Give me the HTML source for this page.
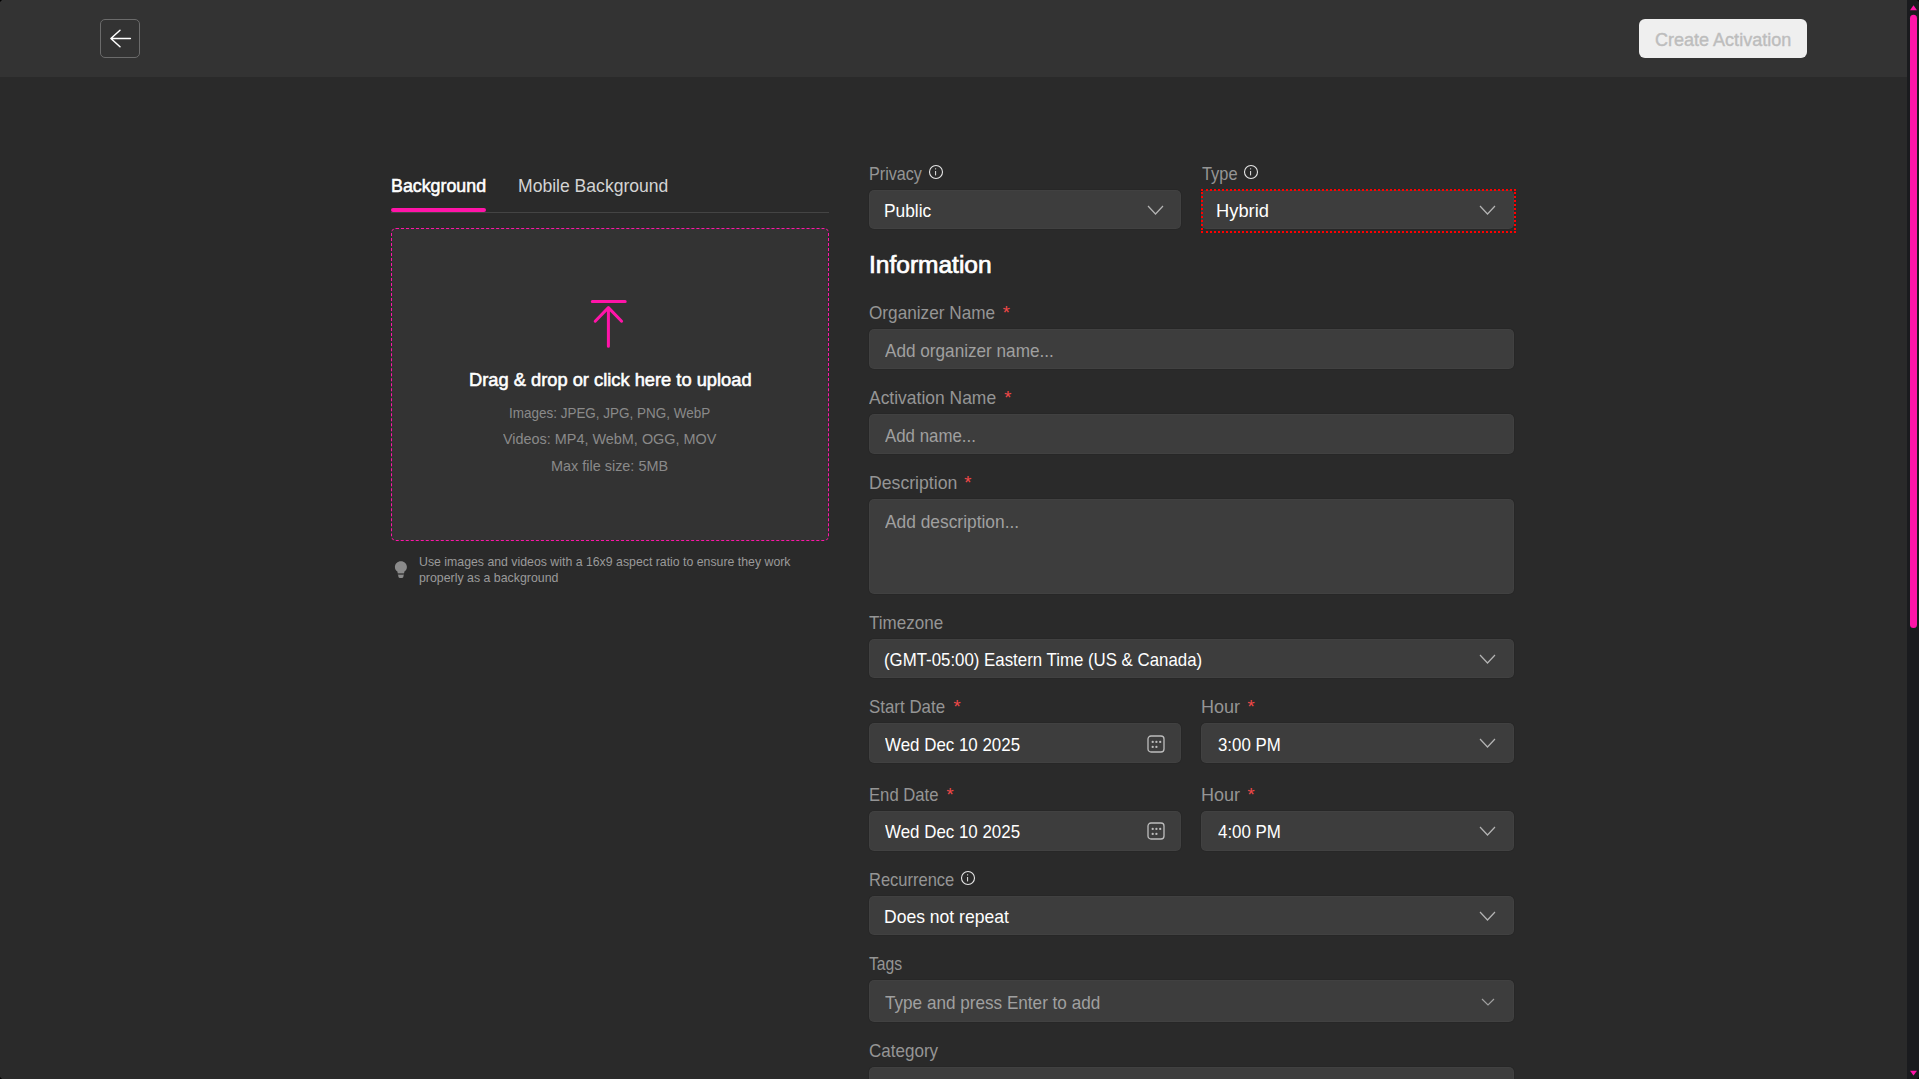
<!DOCTYPE html><html><head><meta charset="utf-8"><style>
html,body{margin:0;padding:0;width:1919px;height:1079px;overflow:hidden;background:#2a2a2a;font-family:"Liberation Sans",sans-serif}
.a{position:absolute}
.t{position:absolute;white-space:pre;transform-origin:0 0;line-height:20px;font-family:"Liberation Sans",sans-serif}
.box{position:absolute;background:#3d3d3d;border-radius:5px;box-shadow:0 0 0 1px rgba(0,0,0,0.07),inset 0 0 0 1px rgba(255,255,255,0.025)}
.chev{position:absolute}
</style></head><body>

<div class="a" style="left:0;top:0;width:1907px;height:77px;background:#333333"></div>
<div class="a" style="left:100px;top:19px;width:40px;height:39px;box-sizing:border-box;border:1px solid #6b6b6b;border-radius:5px"></div>
<svg class="a" style="left:100px;top:19px" width="40" height="39" viewBox="0 0 40 39"><path d="M30.4 19.5H10.9M20 11.2L10.9 19.5L20 27.7" fill="none" stroke="#ffffff" stroke-width="1.5" stroke-linecap="round" stroke-linejoin="round"/></svg>
<div class="a" style="left:1639px;top:19px;width:168px;height:39px;background:#efefef;border-radius:6px"></div>
<div class="a" style="left:1907px;top:0;width:12px;height:1079px;background:#1a1b1e"></div>
<svg class="a" style="left:1907px;top:0" width="12" height="1079" viewBox="0 0 12 1079"><path d="M3 10.2L10 10.2L6.5 5.2Z" fill="#ff14a8"/><rect x="3" y="14.8" width="7" height="613.2" rx="3.5" fill="#ff14a8"/><path d="M3 1070.8L10 1070.8L6.5 1075.6Z" fill="#ff14a8"/></svg>
<div class="a" style="left:391px;top:212px;width:438px;height:1px;background:#444444"></div>
<div class="a" style="left:391px;top:208px;width:95px;height:4px;background:#ff14a8;border-radius:2px"></div>
<div class="a" style="left:391px;top:228px;width:438px;height:313px;box-sizing:border-box;border:1px dashed #ff14a8;border-radius:5px;background:#333333"></div>
<svg class="a" style="left:585px;top:290px" width="50" height="65" viewBox="585 290 50 65"><path d="M592.3 301.5H625.2M608.4 307.8V346.3M595.2 321.2L608.4 307.6L621.6 321.2" fill="none" stroke="#ff14a8" stroke-width="3" stroke-linecap="round" stroke-linejoin="round"/></svg>
<svg class="a" style="left:390px;top:556px" width="22" height="26" viewBox="390 556 22 26"><path d="M400.9 561.2C397.5 561.2 394.9 563.8 394.9 567C394.9 569 395.9 570.5 397.4 571.6L397.7 573.2H404.1L404.4 571.6C405.9 570.5 406.9 569 406.9 567C406.9 563.8 404.3 561.2 400.9 561.2Z" fill="#8a8a8a"/><rect x="397.8" y="573.3" width="6.2" height="1.5" fill="#555"/><path d="M398.1 575.1H403.7L403.3 576.9C403 577.6 402.3 577.9 401.6 577.9H400.2C399.5 577.9 398.8 577.6 398.5 576.9Z" fill="#8a8a8a"/></svg>
<div class="box" style="left:869px;top:190px;width:312px;height:39px"></div>
<div class="box" style="left:1201px;top:190px;width:313px;height:39px"></div>
<div class="box" style="left:869px;top:329.3px;width:645px;height:39.7px"></div>
<div class="box" style="left:869px;top:414.2px;width:645px;height:39.6px"></div>
<div class="box" style="left:869px;top:499.2px;width:645px;height:95px"></div>
<div class="box" style="left:869px;top:639.2px;width:645px;height:38.7px"></div>
<div class="box" style="left:869px;top:723.3px;width:312px;height:39.6px"></div>
<div class="box" style="left:1201px;top:723.3px;width:313px;height:39.6px"></div>
<div class="box" style="left:869px;top:811.2px;width:312px;height:39.6px"></div>
<div class="box" style="left:1201px;top:811.2px;width:313px;height:39.6px"></div>
<div class="box" style="left:869px;top:896.2px;width:645px;height:38.4px"></div>
<div class="box" style="left:869px;top:980.4px;width:645px;height:41.3px"></div>
<div class="box" style="left:869px;top:1067.1px;width:645px;height:40px"></div>
<div class="a" style="left:1201px;top:189px;width:315px;height:44px;box-sizing:border-box;border:2px dotted #ff0000"></div>
<svg class="a" style="left:1146.0px;top:204.3px" width="19" height="12" viewBox="0 0 19 12"><path d="M2 2L9.5 10L17 2" fill="none" stroke="#b4b4b4" stroke-width="1.2"/></svg>
<svg class="a" style="left:1477.9px;top:204.3px" width="19" height="12" viewBox="0 0 19 12"><path d="M2 2L9.5 10L17 2" fill="none" stroke="#b4b4b4" stroke-width="1.2"/></svg>
<svg class="a" style="left:1477.9px;top:653.3px" width="19" height="12" viewBox="0 0 19 12"><path d="M2 2L9.5 10L17 2" fill="none" stroke="#b4b4b4" stroke-width="1.2"/></svg>
<svg class="a" style="left:1477.9px;top:737.3px" width="19" height="12" viewBox="0 0 19 12"><path d="M2 2L9.5 10L17 2" fill="none" stroke="#b4b4b4" stroke-width="1.2"/></svg>
<svg class="a" style="left:1477.9px;top:825.0px" width="19" height="12" viewBox="0 0 19 12"><path d="M2 2L9.5 10L17 2" fill="none" stroke="#b4b4b4" stroke-width="1.2"/></svg>
<svg class="a" style="left:1477.9px;top:909.7px" width="19" height="12" viewBox="0 0 19 12"><path d="M2 2L9.5 10L17 2" fill="none" stroke="#b4b4b4" stroke-width="1.2"/></svg>
<svg class="a" style="left:1479.9px;top:996.5px" width="16" height="10" viewBox="0 0 16 10"><path d="M2 2L8.0 8L14 2" fill="none" stroke="#a0a0a0" stroke-width="1.2"/></svg>
<svg class="a" style="left:1146.5px;top:734.5px" width="18" height="18" viewBox="0 0 18 18"><rect x="1" y="1" width="16" height="16" rx="3" fill="none" stroke="#bdbdbd" stroke-width="1.3"/><g fill="#bdbdbd"><circle cx="5.7" cy="6.9" r="1.15"/><circle cx="9.4" cy="6.9" r="1.15"/><circle cx="13.2" cy="6.9" r="1.15"/><circle cx="5.7" cy="11.9" r="1.15"/><circle cx="9.4" cy="11.9" r="1.15"/></g></svg>
<svg class="a" style="left:1146.5px;top:822.2px" width="18" height="18" viewBox="0 0 18 18"><rect x="1" y="1" width="16" height="16" rx="3" fill="none" stroke="#bdbdbd" stroke-width="1.3"/><g fill="#bdbdbd"><circle cx="5.7" cy="6.9" r="1.15"/><circle cx="9.4" cy="6.9" r="1.15"/><circle cx="13.2" cy="6.9" r="1.15"/><circle cx="5.7" cy="11.9" r="1.15"/><circle cx="9.4" cy="11.9" r="1.15"/></g></svg>
<svg class="a" style="left:927.9px;top:163.9px" width="16" height="16" viewBox="0 0 16 16"><circle cx="8" cy="8" r="6.5" fill="none" stroke="#e6e6e6" stroke-width="1.1"/><circle cx="7.6" cy="4.85" r="0.65" fill="#e6e6e6"/><path d="M7.6 7.4V11" stroke="#e6e6e6" stroke-width="1" stroke-linecap="round"/></svg>
<svg class="a" style="left:1243.0px;top:163.9px" width="16" height="16" viewBox="0 0 16 16"><circle cx="8" cy="8" r="6.5" fill="none" stroke="#e6e6e6" stroke-width="1.1"/><circle cx="7.6" cy="4.85" r="0.65" fill="#e6e6e6"/><path d="M7.6 7.4V11" stroke="#e6e6e6" stroke-width="1" stroke-linecap="round"/></svg>
<svg class="a" style="left:959.8px;top:870.0px" width="16" height="16" viewBox="0 0 16 16"><circle cx="8" cy="8" r="6.5" fill="none" stroke="#e6e6e6" stroke-width="1.1"/><circle cx="7.6" cy="4.85" r="0.65" fill="#e6e6e6"/><path d="M7.6 7.4V11" stroke="#e6e6e6" stroke-width="1" stroke-linecap="round"/></svg>
<div class="t" style="left:1655.40px;top:30px;font-size:18.460px;font-weight:400;color:#bdbdbd;transform:scaleX(0.9773);-webkit-text-stroke:0.4px #bdbdbd">Create Activation</div>
<div class="t" style="left:390.94px;top:176px;font-size:18.605px;font-weight:400;color:#ffffff;transform:scaleX(0.9582);-webkit-text-stroke:0.55px #ffffff">Background</div>
<div class="t" style="left:518.46px;top:176px;font-size:18.605px;font-weight:400;color:#d4d4d4;transform:scaleX(0.9447);">Mobile Background</div>
<div class="t" style="left:468.99px;top:370px;font-size:18.169px;font-weight:400;color:#ffffff;transform:scaleX(1.0073);-webkit-text-stroke:0.55px #ffffff">Drag &amp; drop or click here to upload</div>
<div class="t" style="left:508.85px;top:403px;font-size:14.971px;font-weight:400;color:#8a8a8a;transform:scaleX(0.9000);">Images: JPEG, JPG, PNG, WebP</div>
<div class="t" style="left:503.10px;top:429px;font-size:14.971px;font-weight:400;color:#8a8a8a;transform:scaleX(0.9631);">Videos: MP4, WebM, OGG, MOV</div>
<div class="t" style="left:550.94px;top:456px;font-size:14.971px;font-weight:400;color:#8a8a8a;transform:scaleX(0.9638);">Max file size: 5MB</div>
<div class="t" style="left:419.20px;top:552px;font-size:12.791px;font-weight:400;color:#9a9a9a;transform:scaleX(0.9630);">Use images and videos with a 16x9 aspect ratio to ensure they work</div>
<div class="t" style="left:419.20px;top:568px;font-size:12.791px;font-weight:400;color:#9a9a9a;transform:scaleX(0.9665);">properly as a background</div>
<div class="t" style="left:868.71px;top:164px;font-size:18.169px;font-weight:400;color:#959595;transform:scaleX(0.8882);">Privacy</div>
<div class="t" style="left:1201.50px;top:164px;font-size:18.169px;font-weight:400;color:#959595;transform:scaleX(0.9041);">Type</div>
<div class="t" style="left:884.04px;top:201px;font-size:18.169px;font-weight:400;color:#ffffff;transform:scaleX(0.9551);">Public</div>
<div class="t" style="left:1216.49px;top:201px;font-size:18.169px;font-weight:400;color:#ffffff;transform:scaleX(1.0086);">Hybrid</div>
<div class="t" style="left:868.74px;top:255px;font-size:23.983px;font-weight:400;color:#ffffff;transform:scaleX(1.0225);-webkit-text-stroke:0.7px #ffffff">Information</div>
<div class="t" style="left:869.00px;top:303px;font-size:18.169px;font-weight:400;color:#959595;transform:scaleX(0.9467);">Organizer Name</div>
<div class="t" style="left:885.00px;top:341px;font-size:18.169px;font-weight:400;color:#a0a0a0;transform:scaleX(0.9449);">Add organizer name...</div>
<div class="t" style="left:869.00px;top:388px;font-size:18.169px;font-weight:400;color:#959595;transform:scaleX(0.9614);">Activation Name</div>
<div class="t" style="left:885.25px;top:426px;font-size:18.169px;font-weight:400;color:#a0a0a0;transform:scaleX(0.9282);">Add name...</div>
<div class="t" style="left:868.73px;top:473px;font-size:18.169px;font-weight:400;color:#959595;transform:scaleX(0.9727);">Description</div>
<div class="t" style="left:884.80px;top:512px;font-size:18.169px;font-weight:400;color:#a0a0a0;transform:scaleX(0.9559);">Add description...</div>
<div class="t" style="left:869.20px;top:613px;font-size:18.169px;font-weight:400;color:#959595;transform:scaleX(0.9374);">Timezone</div>
<div class="t" style="left:884.07px;top:650px;font-size:18.169px;font-weight:400;color:#ffffff;transform:scaleX(0.9272);">(GMT-05:00) Eastern Time (US &amp; Canada)</div>
<div class="t" style="left:869.20px;top:697px;font-size:18.169px;font-weight:400;color:#959595;transform:scaleX(0.9309);">Start Date</div>
<div class="t" style="left:884.80px;top:735px;font-size:18.169px;font-weight:400;color:#ffffff;transform:scaleX(0.9316);">Wed Dec 10 2025</div>
<div class="t" style="left:1200.81px;top:697px;font-size:18.169px;font-weight:400;color:#959595;transform:scaleX(0.9920);">Hour</div>
<div class="t" style="left:1217.70px;top:735px;font-size:18.169px;font-weight:400;color:#ffffff;transform:scaleX(0.9264);">3:00 PM</div>
<div class="t" style="left:868.78px;top:785px;font-size:18.169px;font-weight:400;color:#959595;transform:scaleX(0.9182);">End Date</div>
<div class="t" style="left:884.80px;top:822px;font-size:18.169px;font-weight:400;color:#ffffff;transform:scaleX(0.9316);">Wed Dec 10 2025</div>
<div class="t" style="left:1200.81px;top:785px;font-size:18.169px;font-weight:400;color:#959595;transform:scaleX(0.9920);">Hour</div>
<div class="t" style="left:1217.50px;top:822px;font-size:18.169px;font-weight:400;color:#ffffff;transform:scaleX(0.9294);">4:00 PM</div>
<div class="t" style="left:868.79px;top:870px;font-size:18.169px;font-weight:400;color:#959595;transform:scaleX(0.9089);">Recurrence</div>
<div class="t" style="left:884.28px;top:907px;font-size:18.169px;font-weight:400;color:#ffffff;transform:scaleX(0.9657);">Does not repeat</div>
<div class="t" style="left:869.20px;top:954px;font-size:18.169px;font-weight:400;color:#959595;transform:scaleX(0.8648);">Tags</div>
<div class="t" style="left:885.00px;top:993px;font-size:18.169px;font-weight:400;color:#a0a0a0;transform:scaleX(0.9436);">Type and press Enter to add</div>
<div class="t" style="left:869.00px;top:1041px;font-size:18.169px;font-weight:400;color:#959595;transform:scaleX(0.9384);">Category</div>
<div class="t" style="left:1002.70px;top:303px;font-size:18.5px;color:#f04848">*</div>
<div class="t" style="left:1004.20px;top:388px;font-size:18.5px;color:#f04848">*</div>
<div class="t" style="left:964.20px;top:473px;font-size:18.5px;color:#f04848">*</div>
<div class="t" style="left:953.40px;top:697px;font-size:18.5px;color:#f04848">*</div>
<div class="t" style="left:1247.40px;top:697px;font-size:18.5px;color:#f04848">*</div>
<div class="t" style="left:946.40px;top:785px;font-size:18.5px;color:#f04848">*</div>
<div class="t" style="left:1247.40px;top:785px;font-size:18.5px;color:#f04848">*</div>
<div class="a" style="left:0;top:0;width:3px;height:3px;background:radial-gradient(circle at 100% 100%,transparent 2.6px,#000 3.2px)"></div>
<div class="a" style="right:0;top:0;width:3px;height:3px;background:radial-gradient(circle at 0 100%,transparent 2.6px,#000 3.2px)"></div>
<div class="a" style="left:0;bottom:0;width:3px;height:3px;background:radial-gradient(circle at 100% 0,transparent 2.6px,#000 3.2px)"></div>
<div class="a" style="right:0;bottom:0;width:3px;height:3px;background:radial-gradient(circle at 0 0,transparent 2.6px,#000 3.2px)"></div>
</body></html>
